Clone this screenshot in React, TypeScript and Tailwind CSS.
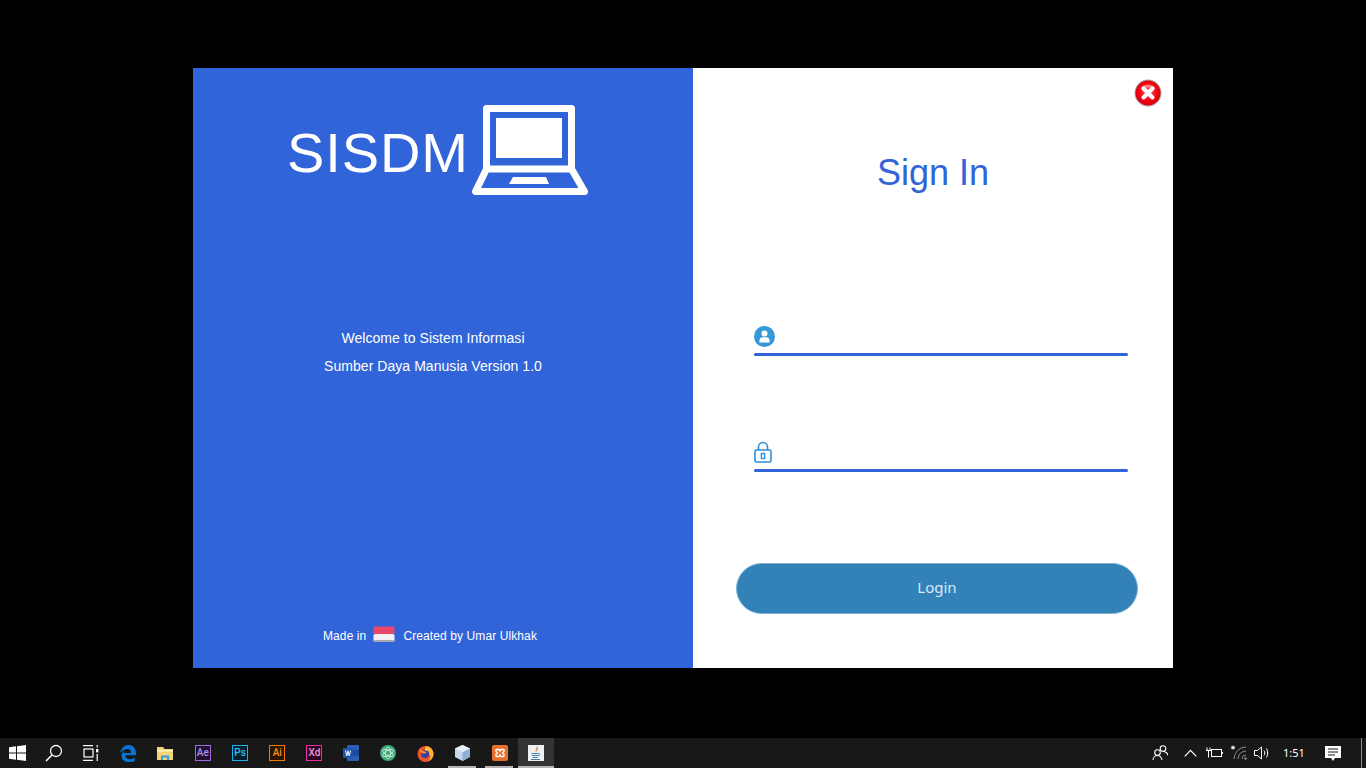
const LaptopLogo = () => (
  <svg width="120" height="94" viewBox="470 103 120 94" className="shrink-0">
    <path d="M486.5 169V108.5H571.5V169M486.5 169L475.5 191.5H584.5L571.5 169H486.5Z" fill="none" stroke="#fff" strokeWidth="7" strokeLinejoin="round" />
    <rect x="496" y="118" width="66" height="40" fill="#fff" />
    <path d="M513 177H546L549 184H509Z" fill="#fff" />
  </svg>
);

const CloseIcon = () => (
  <svg width="28" height="28" viewBox="0 0 28 28">
    <defs>
      <radialGradient id="closeGrad" cx="50%" cy="45%" r="55%">
        <stop offset="0%" stopColor="#ff5a5a" />
        <stop offset="70%" stopColor="#f0000f" />
        <stop offset="100%" stopColor="#d4000c" />
      </radialGradient>
    </defs>
    <circle cx="14" cy="14" r="13.5" fill="#a8a8a8" />
    <circle cx="14" cy="14" r="12.5" fill="url(#closeGrad)" />
    <path d="M6 10a9 8 0 0 1 16 0a14 8 0 0 0-16 0Z" fill="#fff" opacity="0.45" />
    <path d="M9.5 9.5L18.5 18.5M18.5 9.5L9.5 18.5" stroke="#fff" strokeWidth="4" strokeLinecap="round" />
  </svg>
);

const UserIcon = () => (
  <svg width="21" height="21" viewBox="0 0 21 21">
    <circle cx="10.5" cy="10.5" r="10.5" fill="#3498db" />
    <circle cx="10.5" cy="7.5" r="3" fill="#fff" />
    <path d="M5.5 16.5v-2.2c0-1.8 1.5-3 3-3h4c1.5 0 3 1.2 3 3v2.2Z" fill="#fff" />
  </svg>
);

const LockIcon = () => (
  <svg width="18" height="22" viewBox="0 0 18 22">
    <path d="M4.5 9V6a4.5 4.5 0 0 1 9 0v3" fill="none" stroke="#2a8fdc" strokeWidth="1.6" />
    <rect x="1" y="9" width="16" height="12" rx="1.5" fill="#fff" stroke="#2a8fdc" strokeWidth="1.6" />
    <rect x="7.4" y="12.5" width="3.2" height="5" fill="none" stroke="#2a8fdc" strokeWidth="1.4" />
  </svg>
);

const Flag = () => (
  <svg width="22" height="16" viewBox="0 0 22 16">
    <rect x="0.5" y="0.5" width="21" height="7.5" rx="1.5" fill="#e8486a" />
    <rect x="0.5" y="8" width="21" height="7.5" rx="1.5" fill="#f3f1f1" />
    <rect x="0.5" y="14" width="21" height="1.5" fill="#a9a9a9" />
  </svg>
);

const WinLogo = () => (
  <svg width="17" height="16" viewBox="0 0 17 16"><path d="M0 2.3L7 1.3V7.5H0ZM8 1.2L17 0V7.5H8ZM0 8.5H7V14.7L0 13.7ZM8 8.5H17V16L8 14.8Z" fill="#fff" /></svg>
);

const SearchGlyph = () => (
  <svg width="18" height="18" viewBox="0 0 18 18" fill="none" stroke="#fff" strokeWidth="1.3"><circle cx="11" cy="7" r="5.5" /><path d="M7 11L1 17" strokeWidth="1.6" /></svg>
);

const TaskView = () => (
  <svg width="16" height="16" viewBox="0 0 16 16" fill="none" stroke="#fff" strokeWidth="1.2">
    <path d="M0 .6H10M0 15.4H10" /><rect x="1" y="4" width="9" height="8" /><rect x="13" y="4" width="2.4" height="3.4" fill="#fff" stroke="none" /><path d="M14.2 0V2.5M14.2 9V16" />
  </svg>
);

const EdgeIcon = () => (
  <svg width="16" height="17" viewBox="0 0 16 17">
    <path d="M.3 8C1 3 4.5 0 8.5 0c4.6 0 7.5 3.2 7.5 8.8v1.4H5.2c.2 2.8 2.2 4 4.6 4 1.8 0 3.6-.5 5-1.4v3.3c-1.6.8-3.5 1.2-5.6 1.2C4 17.300 1.500 14 1.500 11c0-2 1-4 3.500-5.500C4 7 3.800 7.500 3.700 8H11c0-2.500-1-4-3.500-4C5 4 2.500 5.500.3 8Z" fill="#0a74d6" />
  </svg>
);

const FolderIcon = () => (
  <svg width="16" height="15" viewBox="0 0 16 15">
    <path d="M0 1h6l1.500 2H16v11H0Z" fill="#f2d576" />
    <path d="M0 4h16v1.500H0Z" fill="#fff1bd" />
    <path d="M4 14V9.500h8V14h-2v-2.500H6V14Z" fill="#3a9ad9" />
  </svg>
);

const AppBox = ({ label, border, text, bg }: { label: string; border: string; text: string; bg: string }) => (
  <div className={`ml-[1px] flex h-4 w-4 items-center justify-center border ${border} ${bg} ${text} font-['Roboto',sans-serif] text-[10px] font-medium leading-none`}>
    {label}
  </div>
);

const WordIcon = () => (
  <svg width="16" height="16" viewBox="0 0 16 16">
    <rect x="4" y="0" width="12" height="16" rx="1" fill="#2b5fb5" />
    <rect x="4" y="5" width="12" height="6" fill="#1d4a94" />
    <rect x="0" y="3" width="10" height="10" fill="#1c56b0" />
    <path d="M2 5.500L3.300 11H4.300L5 7.500L5.700 11H6.700L8 5.500H7L6.200 9L5.500 5.500H4.500L3.800 9L3 5.500Z" fill="#fff" />
  </svg>
);

const AtomIcon = () => (
  <svg width="16" height="16" viewBox="0 0 16 16">
    <circle cx="8" cy="8" r="8" fill="#3fa878" />
    <g fill="none" stroke="#d8efe3" strokeWidth="0.8">
      <ellipse cx="8" cy="8" rx="2.500" ry="6" />
      <ellipse cx="8" cy="8" rx="2.500" ry="6" transform="rotate(60 8 8)" />
      <ellipse cx="8" cy="8" rx="2.500" ry="6" transform="rotate(120 8 8)" />
    </g>
  </svg>
);

const FirefoxIcon = () => (
  <svg width="17" height="17" viewBox="0 0 17 17">
    <circle cx="8.500" cy="9" r="8" fill="#e8552b" />
    <path d="M8.500 1c4 0 8 3 8 8 0 3-2 6-5 7 2-2 2.500-5 1-7-.5-1.500-2-3-4-3.500Z" fill="#ffb52e" />
    <circle cx="8" cy="9" r="4" fill="#3a3fa8" />
    <path d="M2 4c1 1 3 1 4 2 1 .5 3 .5 3.500 1.500C8.500 8.500 6 9 5 8 3.500 7.500 2.500 6 2 4Z" fill="#ff8a1f" />
    <path d="M8 3.500c1.500 0 3 .5 4 1.500-1 0-2.500.5-3.500 1Z" fill="#ffd45a" />
  </svg>
);

const CubeIcon = () => (
  <svg width="15" height="16" viewBox="0 0 15 16">
    <path d="M7.500 0L15 3.500V12L7.500 16L0 12V3.500Z" fill="#c4d8ee" />
    <path d="M7.500 7L15 3.500V12L7.500 16Z" fill="#8eaed3" />
    <path d="M7.500 0L15 3.500L7.500 7L0 3.500Z" fill="#e6f0fb" />
  </svg>
);

const XamppIcon = () => (
  <svg width="16" height="16" viewBox="0 0 16 16">
    <rect width="16" height="16" rx="2" fill="#e8702d" />
    <path d="M5 4.500h2l1 1.500 1-1.500h2c1 0 1.500 1 1 2L10.500 8 12 9.500c.5 1 0 2-1 2H9L8 10l-1 1.500H5c-1 0-1.500-1-1-2L5.500 8 4 6.500c-.5-1 0-2 1-2Z" fill="none" stroke="#fff" strokeWidth="1.300" />
  </svg>
);

const JavaIcon = () => (
  <svg width="16" height="16" viewBox="0 0 16 16">
    <rect width="16" height="16" fill="#eef1f4" />
    <path d="M9 1.500c1 2-2 3-1 5 .5-1 2.500-2 1-5Z" fill="#e2711d" stroke="#e2711d" strokeWidth="0.500" />
    <path d="M3.500 8.500h7M4 10.500h6.500M4.500 12.500h5M3 14.500h9" stroke="#4a7aa8" strokeWidth="1" />
    <path d="M10.500 8.500c2 0 2 2-.5 2.500" fill="none" stroke="#4a7aa8" strokeWidth="0.800" />
  </svg>
);

const People = () => (
  <svg width="16" height="16" viewBox="0 0 16 16" fill="none" stroke="#fff" strokeWidth="1.100">
    <circle cx="11" cy="3.500" r="2.800" /><circle cx="5.500" cy="7.500" r="2.800" />
    <path d="M1 15c0-2.500 2-4.500 4.500-4.500s4 2 4.500 4.500M11 6.500c2.500 0 4.500 1.500 5 4" />
  </svg>
);

const Chevron = () => (
  <svg width="13" height="8" viewBox="0 0 13 8" fill="none" stroke="#fff" strokeWidth="1.200"><path d="M.7 7.300L6.500 1.300L12.300 7.300" /></svg>
);

const Battery = () => (
  <svg width="17" height="12" viewBox="0 0 17 12" fill="none" stroke="#fff" strokeWidth="1">
    <rect x="5.500" y="2.500" width="10" height="7" /><path d="M16.500 5v2" />
    <path d="M0 3.500h5M1 .5v3M4 .5v3M2.500 3.500v7" />
  </svg>
);

const Wifi = () => (
  <svg width="20" height="16" viewBox="0 0 20 16" fill="none" stroke="#8a8a8a" strokeWidth="1">
    <path d="M3 0l.7 1.700 1.800-.5-1.200 1.400 1.200 1.500-1.800-.6L3 5.200l-.7-1.700-1.800.6 1.200-1.500L.5 1.200l1.800.5Z" fill="#fff" stroke="none" />
    <path d="M4 14A12 12 0 0 1 16 2M8 14A8 8 0 0 1 16 6M12 14A4 4 0 0 1 16 10" />
    <circle cx="15.500" cy="13.500" r="1.300" fill="#8a8a8a" stroke="none" />
  </svg>
);

const Volume = () => (
  <svg width="16" height="14" viewBox="0 0 16 14" fill="none" stroke="#fff" strokeWidth="1">
    <path d="M.5 4.500h3L7.500 1v12l-4-3.500h-3Z" />
    <path d="M10 4.500c1 1.500 1 3.500 0 5M12.500 2.500c1.500 2.500 1.500 6.500 0 9" />
  </svg>
);

const Notify = () => (
  <svg width="16" height="15" viewBox="0 0 16 15">
    <path d="M0 0H16V12H10L8 15L6 12H0Z" fill="#fff" />
    <path d="M3 3H13M3 6H13M3 9H10" stroke="#1a1a1a" strokeWidth="1" />
  </svg>
);

const taskbarApps = [
  { id: 'search', icon: <SearchGlyph /> },
  { id: 'tasks', icon: <TaskView /> },
  { id: 'edge', icon: <EdgeIcon /> },
  { id: 'files', icon: <FolderIcon /> },
  { id: 'ae', icon: <AppBox label="Ae" border="border-[#9a6ce0]" text="text-[#b08cf0]" bg="bg-[#1f0f33]" /> },
  { id: 'ps', icon: <AppBox label="Ps" border="border-[#16b4ee]" text="text-[#2cc0f5]" bg="bg-[#04202e]" /> },
  { id: 'ai', icon: <AppBox label="Ai" border="border-[#f07a10]" text="text-[#f58a20]" bg="bg-[#2b1500]" /> },
  { id: 'xd', icon: <AppBox label="Xd" border="border-[#e22fa8]" text="text-[#ef9ad8]" bg="bg-[#2e0020]" /> },
  { id: 'word', icon: <WordIcon /> },
  { id: 'atom', icon: <AtomIcon /> },
  { id: 'firefox', icon: <FirefoxIcon /> },
  { id: 'cube', icon: <CubeIcon />, open: true },
  { id: 'xampp', icon: <XamppIcon />, open: true },
  { id: 'java', icon: <JavaIcon />, active: true },
];

function Field({ icon, className }: { icon: React.ReactNode; className: string }) {
  return (
    <div className={`flex w-[374px] flex-col ${className}`}>
      <div className="flex h-[24px] items-end pb-[3px]">{icon}</div>
      <div className="mt-[3px] h-[3px] rounded-full bg-[#3064d8]" />
    </div>
  );
}

export default function App() {
  return (
    <div className="flex h-[768px] w-[1366px] flex-col overflow-hidden bg-black font-['Liberation_Sans',sans-serif]">
      <div className="flex-1 pl-[193px] pt-[68px]">
        <div className="flex h-[600px] w-[980px]">
          {/* Left panel */}
          <div className="flex w-[500px] flex-col items-center bg-[#3064d8] text-white">
            <div className="ml-[-8px] mt-[35px] flex h-[94px] w-[304px] items-start">
              <span className="mt-[18px] w-[183px] text-[56px] leading-[64px] tracking-[0.9px]">SISDM</span>
              <LaptopLogo />
            </div>
            <div className="ml-[-20px] mt-[127px] text-center text-[14px] leading-[28px] tracking-[0.05px]">
              <p>Welcome to Sistem Informasi</p>
              <p>Sumber Daya Manusia Version 1.0</p>
            </div>
            <div className="ml-[-26px] mt-auto mb-[24px] flex items-center text-[12px] leading-[16px] tracking-[0.1px]">
              <span>Made in</span>
              <span className="ml-[7px] mr-[8px] mt-[-4px] flex"><Flag /></span>
              <span>Created by Umar Ulkhak</span>
            </div>
          </div>

          {/* Right panel */}
          <div className="relative flex w-[480px] flex-col bg-white">
            <button className="absolute right-[11px] top-[11px] flex"><CloseIcon /></button>
            <h1 className="ml-[184px] mt-[84px] text-[36px] font-normal leading-[42px] text-[#3064d8]">Sign In</h1>
            <Field icon={<UserIcon />} className="ml-[61px] mt-[132px]" />
            <Field icon={<LockIcon />} className="ml-[61px] mt-[86px]" />
            <button className="ml-[43px] mt-[91px] flex h-[51px] w-[402px] items-center justify-center rounded-full border border-[#7fb2d6] bg-[#3282b8] pb-[2px] font-['Noto_Sans',sans-serif] text-[15px] text-[#d9e9f4]">
              Login
            </button>
          </div>
        </div>
      </div>

      {/* Taskbar */}
      <div className="flex h-[30px] items-stretch bg-[#181818]">
        <div className="flex w-[35px] items-center justify-center"><WinLogo /></div>
        {taskbarApps.map((a) => (
          <div
            key={a.id}
            className={`relative flex items-center justify-center ${a.active ? 'w-[36px] bg-[#333333]' : 'w-[37.2px]'}`}
          >
            {a.icon}
            {a.open && <span className="absolute bottom-0 left-[4px] h-[2px] w-[28px] bg-[#b5b5b5]" />}
            {a.active && <span className="absolute bottom-0 left-0 h-[2px] w-full bg-[#b5b5b5]" />}
          </div>
        ))}
        <div className="ml-auto flex items-center pr-[4px]">
          <div className="flex w-[16px]"><People /></div>
          <div className="ml-[16px] flex"><Chevron /></div>
          <div className="ml-[9px] flex"><Battery /></div>
          <div className="ml-[7px] flex"><Wifi /></div>
          <div className="ml-[4px] flex"><Volume /></div>
          <span className="ml-[13px] mt-[-1px] w-[21px] font-['Noto_Sans',sans-serif] text-[11px] leading-none text-white">1:51</span>
          <div className="ml-[21px] flex"><Notify /></div>
          <div className="ml-[20px] h-[30px] w-[1px] bg-[#8a8a8a]" />
        </div>
      </div>
    </div>
  );
}
